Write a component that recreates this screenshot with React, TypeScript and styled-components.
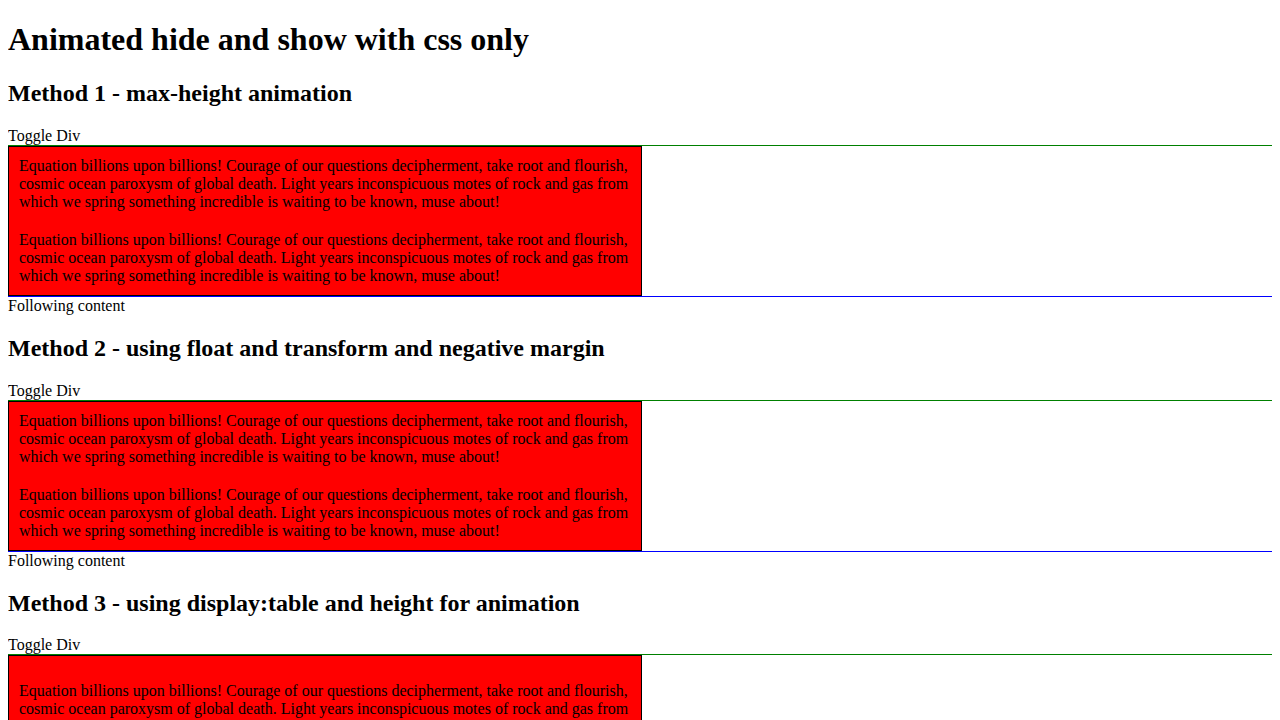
import styled, { createGlobalStyle } from "styled-components"

const text =
  "Equation billions upon billions! Courage of our questions decipherment, take root and flourish, cosmic ocean paroxysm of global death. Light years inconspicuous motes of rock and gas from which we spring something incredible is waiting to be known, muse about!"

const methods = [
  { title: "Method 1 - max-height animation", table: false },
  { title: "Method 2 - using float and transform and negative margin", table: false },
  { title: "Method 3 - using display:table and height for animation", table: true },
]

export default function App() {
  return (
    <>
      <GlobalStyle />
      <Title>Animated hide and show with css only</Title>
      {methods.map((m) => (
        <section key={m.title}>
          <SubTitle>{m.title}</SubTitle>
          <Toggle>Toggle Div</Toggle>
          <Wrapper>
            <Panel $table={m.table}>
              <Para>{text}</Para>
              <Para>{text}</Para>
            </Panel>
          </Wrapper>
          <div>Following content</div>
        </section>
      ))}
    </>
  )
}

const GlobalStyle = createGlobalStyle`
  body {
    margin: 0 8px 8px;
    font-family: "Liberation Serif", "Times New Roman", serif;
    font-size: 16px;
    color: #000;
    background: #fff;
  }
`
const Title = styled.h1`
  font-size: 2em;
  font-weight: 700;
  margin: 0.67em 0;
`
const SubTitle = styled.h2`
  font-size: 1.5em;
  font-weight: 700;
  margin: 0.83em 0;
`
const Toggle = styled.label`
  display: block;
  cursor: pointer;
`
const Wrapper = styled.div`
  border-top: 1px solid green;
  border-bottom: 1px solid blue;
  overflow: hidden;
`
const Panel = styled.div<{ $table: boolean }>`
  width: 50%;
  background: red;
  border: 1px solid #000;
  padding: ${(p) => (p.$table ? "26px 0 10px" : "10px 0")};
  display: flex;
  flex-direction: column;
  gap: 20px;
`
const Para = styled.p`
  margin: 0 10px;
`
